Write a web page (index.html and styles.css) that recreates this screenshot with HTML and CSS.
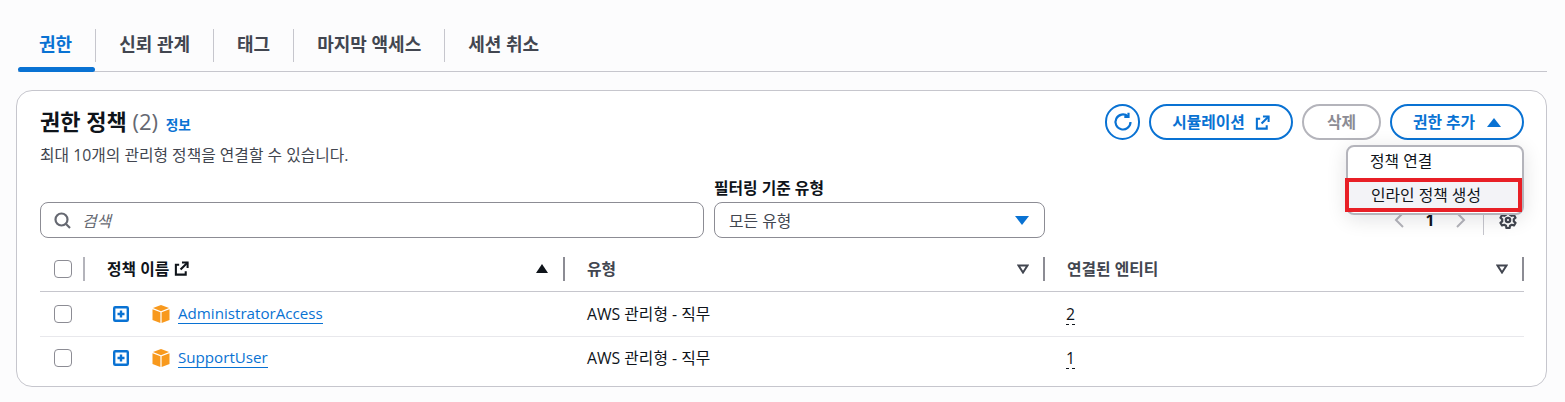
FILE: index.html
```html
<!DOCTYPE html>
<html lang="ko">
<head>
  <meta charset="UTF-8" />
  <meta name="viewport" content="width=device-width, initial-scale=1.0" />
  <title>권한 정책</title>
  <link rel="stylesheet" href="styles.css">
</head>
<body>
  <div class="tabs">
    <a class="tab active">권한</a>
    <a class="tab">신뢰 관계</a>
    <a class="tab">태그</a>
    <a class="tab">마지막 액세스</a>
    <a class="tab">세션 취소</a>
  </div>

  <div class="card">
    <div class="card-header">
      <div>
        <h2>권한 정책 <span class="count">(2)</span> <a class="info">정보</a></h2>
        <p class="desc">최대 10개의 관리형 정책을 연결할 수 있습니다.</p>
      </div>
      <div class="actions">
        <button class="btn btn-icon">
          <svg width="20" height="20" viewBox="0 0 20 20" fill="none" stroke="currentColor" stroke-width="2.200"><path d="M17.500 10a7.500 7.500 0 1 1-2.600-5.700"/><path d="M15.500 0.800v4.200h-4.200"/></svg>
        </button>
        <button class="btn btn-sim"><span class="btn-text">시뮬레이션</span>
          <svg width="15" height="15" viewBox="0 0 16 16" fill="none" stroke="currentColor" stroke-width="2.200"><path d="M5.500 4H2v10.500h10.500V11"/><path d="M8.500 1.500h6v6"/><path d="M14.500 1.500 7 9"/></svg>
        </button>
        <button class="btn btn-disabled"><span class="btn-text">삭제</span></button>
        <button class="btn btn-add"><span class="btn-text">권한 추가</span> <span class="tri-up"></span></button>
      </div>
      <div class="menu">
        <div class="menu-item">정책 연결</div>
        <div class="menu-item marked">인라인 정책 생성</div>
      </div>
    </div>

    <div class="filters">
      <div class="search">
        <svg width="17" height="17" viewBox="0 0 17 17" fill="none" stroke="#656871" stroke-width="2.200"><circle cx="7.500" cy="7.500" r="6"/><path d="m12 12 4 4"/></svg>
        <span>검색</span>
      </div>
      <div class="filter">
        <label>필터링 기준 유형</label>
        <div class="select">모든 유형 <span class="tri-down"></span></div>
      </div>
      <div class="pager">
        <svg width="10" height="16" viewBox="0 0 10 16" fill="none" stroke="#b4b4bb" stroke-width="2"><path d="M9 1 2 8l7 7"/></svg>
        <b>1</b>
        <svg width="10" height="16" viewBox="0 0 10 16" fill="none" stroke="#b4b4bb" stroke-width="2"><path d="m1 1 7 7-7 7"/></svg>
        <span class="pager-line"></span>
        <svg width="18" height="18" viewBox="0 0 18 18" fill="none" stroke="#424650" stroke-width="2.200" stroke-linejoin="round"><path d="M7.500 1.500h3l.5 2.300 1.800 1 2.200-.7 1.500 2.600-1.700 1.600v2.100l1.700 1.500-1.500 2.600-2.200-.7-1.800 1-.5 2.400h-3l-.5-2.400-1.800-1-2.200.7-1.500-2.600 1.700-1.500V8.300L1.500 6.700 3 4.100l2.200.7 1.800-1z"/><circle cx="9" cy="9" r="2.200"/></svg>
      </div>
    </div>

    <table>
      <colgroup>
        <col class="col-check"><col class="col-wide"><col class="col-wide"><col>
      </colgroup>
      <thead>
        <tr>
          <th><span class="check"></span></th>
          <th><div class="th-in">
            <span class="th-label">정책 이름
              <svg width="15" height="15" viewBox="0 0 16 16" fill="none" stroke="#0f141a" stroke-width="2.200"><path d="M5.500 4H2v10.500h10.500V11"/><path d="M8.500 1.500h6v6"/><path d="M14.500 1.500 7 9"/></svg>
            </span>
            <span class="tri-sort"></span>
          </div></th>
          <th><div class="th-in"><span class="th-label">유형</span>
            <svg class="sort-off" width="12" height="10" viewBox="0 0 12 10" fill="none" stroke="#424650" stroke-width="2"><path d="M1.500 1.500h9L6 8.500z"/></svg>
          </div></th>
          <th><div class="th-in"><span class="th-label">연결된 엔티티</span>
            <svg class="sort-off" width="12" height="10" viewBox="0 0 12 10" fill="none" stroke="#424650" stroke-width="2"><path d="M1.500 1.500h9L6 8.500z"/></svg>
          </div></th>
        </tr>
      </thead>
      <tbody>
        <tr>
          <td><span class="check"></span></td>
          <td><div class="name-cell">
            <svg class="plus" width="16" height="16" viewBox="0 0 16 16" fill="none" stroke="#0972d3" stroke-width="2.400"><rect x="1.200" y="1.200" width="13.600" height="13.600" rx="1"/><path d="M8 4.500v7M4.500 8h7"/></svg>
            <svg class="cube" width="18" height="18" viewBox="0 0 18 18" fill="#f8991d"><path d="M9 0 17 3 9 6.200 1 3z"/><path d="M0.500 4.200 8.400 7.300V18L0.500 15z"/><path d="M17.500 4.200 9.600 7.300V18L17.500 15z"/></svg>
            <a class="link">AdministratorAccess</a>
          </div></td>
          <td class="type">AWS 관리형 - 직무</td>
          <td class="type-num"><span class="count-link">2</span></td>
        </tr>
        <tr>
          <td><span class="check"></span></td>
          <td><div class="name-cell">
            <svg class="plus" width="16" height="16" viewBox="0 0 16 16" fill="none" stroke="#0972d3" stroke-width="2.400"><rect x="1.200" y="1.200" width="13.600" height="13.600" rx="1"/><path d="M8 4.500v7M4.500 8h7"/></svg>
            <svg class="cube" width="18" height="18" viewBox="0 0 18 18" fill="#f8991d"><path d="M9 0 17 3 9 6.200 1 3z"/><path d="M0.500 4.200 8.400 7.300V18L0.500 15z"/><path d="M17.500 4.200 9.600 7.300V18L17.500 15z"/></svg>
            <a class="link">SupportUser</a>
          </div></td>
          <td class="type">AWS 관리형 - 직무</td>
          <td class="type-num"><span class="count-link">1</span></td>
        </tr>
      </tbody>
    </table>
  </div>
</body>
</html>
```

FILE: styles.css
```css
* {
  box-sizing: border-box;
}
body {
  margin: 0;
  padding: 28px 18px 0 16px;
  background: #fcfcfd;
  color: #0f141a;
  font-family: "Open Sans", "Noto Sans CJK KR", sans-serif;
  font-size: 15.8px;
}
.tabs {
  display: flex;
  height: 44px;
  margin-left: 2px;
  border-bottom: 1px solid #c6c6cd;
}
.tab {
  position: relative;
  height: 33px;
  margin-top: 1px;
  padding: 0 23px;
  border-left: 1px solid #c6c6cd;
  font-size: 18px;
  font-weight: 700;
  line-height: 30px;
  color: #424650;
}
.tab:first-child {
  padding-left: 21px;
  border-left: 0;
}
.tab.active {
  color: #0972d3;
}
.tab.active::after {
  content: "";
  position: absolute;
  left: 0;
  right: 0;
  bottom: -10px;
  height: 5px;
  border-radius: 3px;
  background: #0972d3;
}
.card {
  margin-top: 18px;
  height: 297px;
  padding: 13px 22px 0 23px;
  background: #fff;
  border: 1px solid #c6c6cd;
  border-radius: 16px;
}
.card-header {
  position: relative;
  display: flex;
  justify-content: space-between;
  height: 63px;
}
h2 {
  margin: 1px 0 0;
  font-size: 22px;
  font-weight: 700;
  line-height: 33px;
}
.count {
  font-weight: 400;
  color: #656871;
}
.info {
  margin-left: 2px;
  font-size: 13.7px;
  color: #0972d3;
}
.desc {
  margin: 4px 0 0;
  font-size: 15.8px;
  line-height: 20px;
  color: #424650;
}
.actions {
  display: flex;
  gap: 9px;
}
.btn {
  display: flex;
  align-items: center;
  justify-content: center;
  height: 36px;
  padding: 0;
  background: #fff;
  color: #0972d3;
  border: 2px solid #0972d3;
  border-radius: 18px;
  font-family: inherit;
  font-size: 15.8px;
  font-weight: 700;
}
.btn-text {
  margin-bottom: 2px;
}
.btn-icon {
  width: 35px;
}
.btn-sim {
  width: 144px;
  gap: 10px;
}
.btn-disabled {
  width: 79px;
  color: #8c8c94;
  border-color: #b4b4bb;
}
.btn-add {
  width: 134px;
  gap: 12px;
}
.tri-up {
  width: 0;
  height: 0;
  border: 7px solid transparent;
  border-top: 0;
  border-bottom: 9px solid #0972d3;
}
.menu {
  position: absolute;
  top: 41px;
  right: 0;
  z-index: 2;
  width: 178px;
  height: 70px;
  padding-top: 1px;
  background: #fff;
  border: 2px solid #b4b4bb;
  border-radius: 8px;
  box-shadow: 0 4px 20px rgba(0, 7, 22, 0.12);
  color: #0f141a;
}
.menu-item {
  height: 30px;
  padding-left: 22px;
  line-height: 26px;
}
.menu-item.marked {
  height: 34px;
  margin-left: -3px;
  background: #f3f3f7;
  border: 4px solid #e81f26;
}
.filters {
  display: flex;
  align-items: flex-end;
  height: 71px;
}
.search {
  display: flex;
  align-items: center;
  gap: 11px;
  width: 664px;
  height: 36px;
  padding-left: 13px;
  border: 1px solid #8c8c94;
  border-radius: 8px;
  font-style: italic;
  color: #656871;
}
.filter {
  width: 331px;
  margin-left: 10px;
}
.filter label {
  display: block;
  height: 24px;
  font-weight: 700;
  line-height: 20px;
}
.select {
  display: flex;
  align-items: center;
  justify-content: space-between;
  height: 36px;
  padding: 0 15px 0 14px;
  border: 1px solid #8c8c94;
  border-radius: 8px;
  color: #424650;
}
.tri-down {
  width: 0;
  height: 0;
  border: 7px solid transparent;
  border-bottom: 0;
  border-top: 9px solid #0972d3;
}
.pager {
  display: flex;
  align-items: center;
  height: 36px;
  margin-left: auto;
  padding-right: 7px;
}
.pager b {
  width: 52px;
  text-align: center;
}
.pager-line {
  width: 1px;
  height: 30px;
  margin: 0 15px 0 17px;
  background: #c6c6cd;
}
table {
  width: 100%;
  margin-top: 9px;
  border-collapse: collapse;
  table-layout: fixed;
}
.col-check {
  width: 43px;
}
.col-wide {
  width: 480px;
}
th {
  height: 44px;
  padding: 0;
  border-bottom: 1px solid #c6c6cd;
  text-align: left;
}
.check {
  display: block;
  width: 18px;
  height: 18px;
  margin-left: 14px;
  background: #fff;
  border: 1px solid #8c8c94;
  border-radius: 4px;
}
.th-in {
  display: flex;
  align-items: center;
  justify-content: space-between;
  height: 24px;
  padding: 0 14px 0 22px;
  border-left: 2px solid #b4b4bb;
}
th:nth-child(2) .th-in {
  padding-right: 15px;
}
th:last-child .th-in {
  border-right: 2px solid #8c8c94;
}
th:nth-child(3) .th-in,
th:nth-child(4) .th-in {
  border-left-color: #8c8c94;
}
.th-label {
  display: flex;
  align-items: center;
  gap: 5px;
  color: #424650;
}
th:nth-child(2) .th-label {
  color: #0f141a;
}
.tri-sort {
  width: 0;
  height: 0;
  border: 6.500px solid transparent;
  border-top: 0;
  border-bottom: 9px solid #0f141a;
}
td {
  height: 45px;
  padding: 0;
  border-bottom: 1px solid #e8e8ec;
}
tbody tr:last-child td {
  height: 43px;
  border-bottom: 0;
}
.name-cell {
  display: flex;
  align-items: center;
  padding-left: 30px;
}
.plus {
  margin-right: 23px;
}
.cube {
  margin-right: 8px;
}
.link {
  font-size: 15.150px;
  color: #0972d3;
  border-bottom: 1px solid #0972d3;
}
.type {
  padding-left: 24px;
}
.type-num {
  padding-left: 23px;
}
.count-link {
  display: inline-block;
  line-height: 19px;
  border-bottom: 1px dashed #0f141a;
}
```
